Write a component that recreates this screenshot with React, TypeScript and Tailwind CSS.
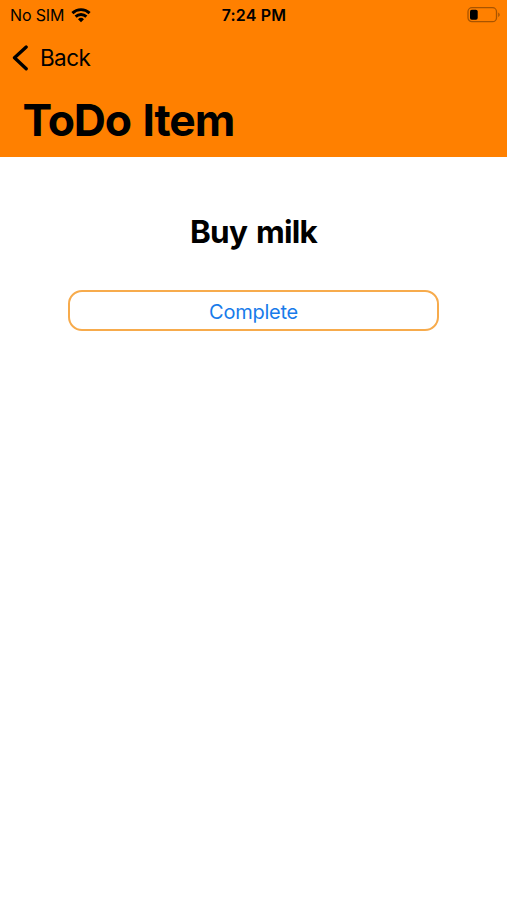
function StatusBar() {
  return (
    <div className="grid h-7 grid-cols-3 items-center px-2.5 pt-0.5 text-base">
      <div className="flex items-center gap-[7px]">
        <span className="tracking-[-0.15px]">No SIM</span>
        <svg className="h-[15px] w-5" viewBox="0 0 20 15" fill="none" stroke="currentColor" strokeWidth="2.9">
          <path d="M1.4 5.1a12.3 12.3 0 0 1 17.2 0" />
          <path d="M4.6 8.6a7.8 7.8 0 0 1 10.8 0" />
          <path d="M10 14.3 7 11.2a4.5 4.5 0 0 1 6 0Z" fill="currentColor" stroke="none" />
        </svg>
      </div>
      <span className="pl-px text-center font-semibold tracking-[0.2px]">7:24 PM</span>
      <svg className="-mr-1 h-4 w-[34px] justify-self-end" viewBox="0 0 34 16" fill="none">
        <rect x="1" y="0.7" width="28.5" height="14" rx="4" stroke="#a85400" strokeWidth="1.3" />
        <rect x="3" y="2.7" width="7.7" height="10" rx="1.8" fill="black" />
        <path d="M31.2 5.4c2 .8 2 3.7 0 4.5Z" fill="#a85400" />
      </svg>
    </div>
  );
}

function Header({ title }: { title: string }) {
  return (
    <header className="h-[157px] bg-[#ff8000]">
      <StatusBar />
      <button className="mt-3.5 flex h-8 items-center gap-3 pl-3 text-[22.5px] tracking-[-0.6px]">
        <svg className="h-[26px] w-4" viewBox="0 0 16 26" fill="none" stroke="currentColor" strokeWidth="3.3" strokeLinecap="round" strokeLinejoin="round">
          <path d="M14.2 2 2.5 12.8 14.2 23.8" />
        </svg>
        Back
      </button>
      <h1 className="mt-4 pl-[22.5px] text-[44.5px] font-bold leading-[60px] tracking-[-1.1px] [word-spacing:2px]">{title}</h1>
    </header>
  );
}

export default function App() {
  return (
    <div className="min-h-screen bg-white font-['Inter',sans-serif] text-black">
      <Header title="ToDo Item" />
      <main className="flex flex-col items-center px-[68px] pt-[53px]">
        <h2 className="text-[31.5px] font-bold leading-[44px] tracking-[-0.75px] [word-spacing:2px]">Buy milk</h2>
        <button className="mt-9 h-[41px] w-full rounded-[14px] border-2 border-[#f7ab4c] pt-0.5 text-xl tracking-[-0.25px] text-[#187bea]">
          Complete
        </button>
      </main>
    </div>
  );
}
